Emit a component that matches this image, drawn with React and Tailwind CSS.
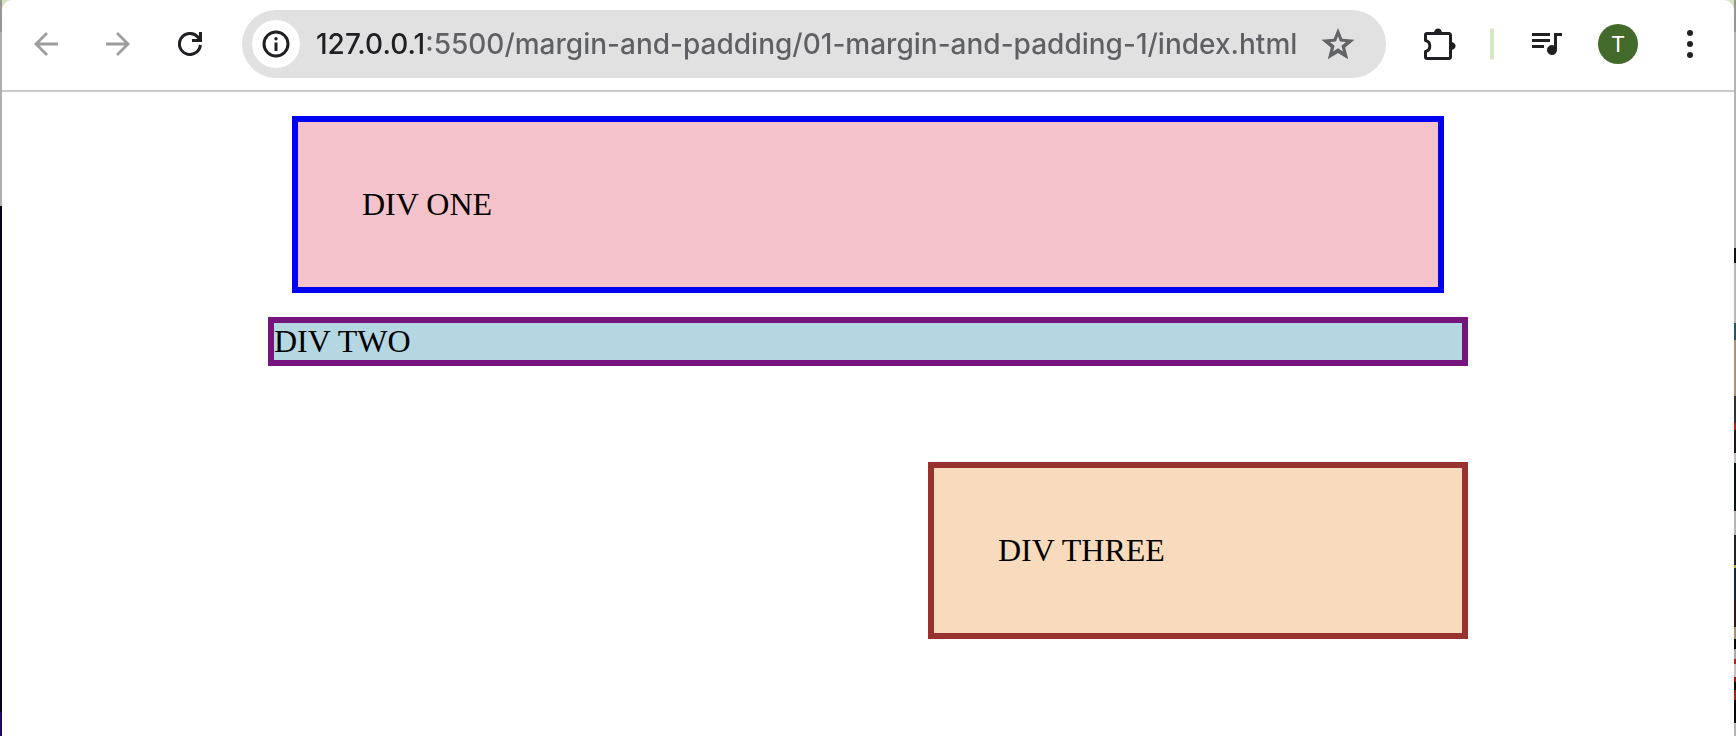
const LEFT_EDGE = [
  ["h-8", "bg-[#969696]"],
  ["h-[174px]", "bg-[#b0b0b0]"],
  ["grow", "bg-[#060418]"],
  ["h-[24px]", "bg-[#220850]"],
];

const RIGHT_EDGE = [
  ["h-8", "bg-[#969696]"],
  ["h-[216px]", "bg-[#b4b4b4]"],
  ["h-[15px]", "bg-[#101010]"],
  ["h-[60px]", "bg-[#b8b8b8]"],
  ["h-[17px]", "bg-[#2c5558]"],
  ["h-[56px]", "bg-[#a8937c]"],
  ["h-[27px]", "bg-[#303030]"],
  ["h-[7px]", "bg-[#b02020]"],
  ["h-[23px]", "bg-[#1c1418]"],
  ["h-[10px]", "bg-[#c0c0c0]"],
  ["h-[48px]", "bg-[#0a1414]"],
  ["h-[24px]", "bg-[#b4b4b4]"],
  ["h-[30px]", "bg-[#202020]"],
  ["h-[3px]", "bg-[#b0b020]"],
  ["h-[32px]", "bg-[#16233c]"],
  ["h-[27px]", "bg-[#2c1c14]"],
  ["h-[12px]", "bg-[#a09478]"],
  ["h-[10px]", "bg-[#080808]"],
  ["h-[10px]", "bg-[#a8a8a8]"],
  ["h-[5px]", "bg-[#c01c1c]"],
  ["h-[13px]", "bg-[#c8c0c0]"],
  ["h-[5px]", "bg-[#b01010]"],
  ["h-[8px]", "bg-[#080808]"],
  ["h-[10px]", "bg-[#a81c1c]"],
  ["h-[23px]", "bg-[#050505]"],
  ["grow", "bg-[#b4b4b4]"],
];

function DesktopEdge({ bands }) {
  return (
    <div className="flex w-0.5 shrink-0 flex-col" aria-hidden="true">
      {bands.map(([height, color], i) => (
        <div key={i} className={`${height} ${color}`} />
      ))}
    </div>
  );
}

function ToolButton({ label, className = "", children }) {
  return (
    <button
      type="button"
      aria-label={label}
      className={`flex size-10 shrink-0 items-center justify-center ${className}`}
    >
      {children}
    </button>
  );
}

function BackIcon() {
  return (
    <svg width="24" height="24" viewBox="0 0 24 24" fill="none" stroke="currentColor" strokeWidth="2.8">
      <path d="M13 1 2 12l11 11M2 12h22" />
    </svg>
  );
}

function ForwardIcon() {
  return (
    <svg width="24" height="24" viewBox="0 0 24 24" fill="none" stroke="currentColor" strokeWidth="2.8">
      <path d="m11 1 11 11-11 11M22 12H0" />
    </svg>
  );
}

function ReloadIcon() {
  return (
    <svg width="24" height="24" viewBox="0 0 24 24" fill="none" stroke="currentColor" strokeWidth="3">
      <path d="M22.4 13A10.5 10.5 0 1 1 19.6 4.8L22 8" />
      <path d="M22.5 0v8.5H14" />
    </svg>
  );
}

function InfoIcon() {
  return (
    <svg width="28" height="28" viewBox="0 0 28 28" fill="none" stroke="currentColor">
      <circle cx="14" cy="14" r="12" strokeWidth="3" />
      <path d="M14 12.5V21" strokeWidth="3" />
      <circle cx="14" cy="8.7" r="1.7" fill="currentColor" stroke="none" />
    </svg>
  );
}

function StarIcon() {
  return (
    <svg width="34" height="32" viewBox="0 0 34 32" fill="currentColor" fillRule="evenodd">
      <path d="m17 0 4.300 10.800 12.200 1-9.300 7.700 3 11.700L17 25 6.800 31.200l3-11.700L.5 11.800l12.200-1zM17 8.200l-2 5.200-6 .5 4.600 3.800-1.500 5.700 4.900-3.100 4.900 3.100-1.500-5.700 4.600-3.800-6-.5z" />
    </svg>
  );
}

function PuzzleIcon() {
  return (
    <svg width="32" height="32" viewBox="0 0 32 32" fill="none" stroke="currentColor" strokeWidth="3">
      <path
        strokeLinejoin="round"
        d="M1.500 12.500V7A1.500 1.500 0 0 1 3 5.500h22A1.500 1.500 0 0 1 26.500 7v22a1.500 1.500 0 0 1-1.500 1.500H3A1.500 1.500 0 0 1 1.500 29v-5.500c2.800-.6 4.300-2.800 4.300-5.500s-1.500-4.900-4.300-5.500z"
      />
      <path d="M10 5a4 4.600 0 0 1 8 0zM27 14a4.600 4 0 0 1 0 8z" fill="currentColor" stroke="none" />
    </svg>
  );
}

function QueueMusicIcon() {
  return (
    <svg width="30" height="24" viewBox="0 0 30 24" fill="currentColor">
      <path d="M0 1h18v3H0zM0 7h18v3H0zM0 13h12v3H0z" />
      <path d="M22 1h8v3h-5v14a5 5 0 1 1-3-4.600z" />
    </svg>
  );
}

function MoreIcon() {
  return (
    <svg width="6" height="28" viewBox="0 0 6 28" fill="currentColor">
      <circle cx="3" cy="3" r="3" />
      <circle cx="3" cy="14" r="3" />
      <circle cx="3" cy="25" r="3" />
    </svg>
  );
}

function Toolbar() {
  return (
    <header className="flex items-center border-b-2 border-[#cacaca] pt-[10px] pr-6 pb-3 pl-6 text-[#1f2023]">
      <nav aria-label="History" className="flex gap-8 text-[#9d9d9d]">
        <ToolButton label="Back">
          <BackIcon />
        </ToolButton>
        <ToolButton label="Forward">
          <ForwardIcon />
        </ToolButton>
        <ToolButton label="Reload" className="text-[#1f2023]">
          <ReloadIcon />
        </ToolButton>
      </nav>

      <form className="ml-8 flex h-[68px] min-w-0 flex-1 items-center rounded-full bg-[#e1e1e1] pr-7 pl-[10px]">
        <button
          type="button"
          aria-label="View site information"
          className="flex size-12 shrink-0 items-center justify-center rounded-full bg-white"
        >
          <InfoIcon />
        </button>
        <input
          type="text"
          aria-label="Address"
          spellCheck={false}
          defaultValue="127.0.0.1:5500/margin-and-padding/01-margin-and-padding-1/index.html"
          className="ml-4 min-w-0 flex-1 bg-[linear-gradient(90deg,#1f2023_109px,#5f6064_109px)] bg-clip-text font-['Inter',sans-serif] text-[28px] font-medium text-transparent outline-none"
        />
        <ToolButton label="Bookmark this tab" className="text-[#626366]">
          <StarIcon />
        </ToolButton>
      </form>

      <div className="ml-[34px] flex items-center">
        <ToolButton label="Extensions">
          <PuzzleIcon />
        </ToolButton>
        <span className="ml-[30px] h-8 w-1 rounded-full bg-[#d3e9c4]" />
        <ToolButton label="Media controls" className="ml-[33px]">
          <QueueMusicIcon />
        </ToolButton>
        <button
          type="button"
          aria-label="Profile"
          className="ml-[31px] flex size-10 shrink-0 items-center justify-center rounded-full bg-[#436a2a] font-['Roboto',sans-serif] text-[22px] text-white"
        >
          T
        </button>
        <ToolButton label="Menu" className="ml-8">
          <MoreIcon />
        </ToolButton>
      </div>
    </header>
  );
}

function Page() {
  return (
    <main className="mx-auto w-full max-w-[1200px] pt-6 font-['Liberation_Serif',serif] text-[32px] leading-[37px] text-black">
      <div className="mx-6 border-6 border-[#0000f5] bg-[#f4c2cb] p-16">DIV ONE</div>
      <div className="mt-6 border-6 border-[#75147c] bg-[#b5d7e2]">DIV TWO</div>
      <div className="mt-24 ml-auto w-[45%] border-6 border-[#98322f] bg-[#f8dbbd] p-16">
        DIV THREE
      </div>
    </main>
  );
}

export default function App() {
  return (
    <div className="flex min-h-screen bg-[#cfe6bd]">
      <DesktopEdge bands={LEFT_EDGE} />
      <div className="min-w-0 flex-1 rounded-t-[10px] bg-white">
        <Toolbar />
        <Page />
      </div>
      <DesktopEdge bands={RIGHT_EDGE} />
    </div>
  );
}
